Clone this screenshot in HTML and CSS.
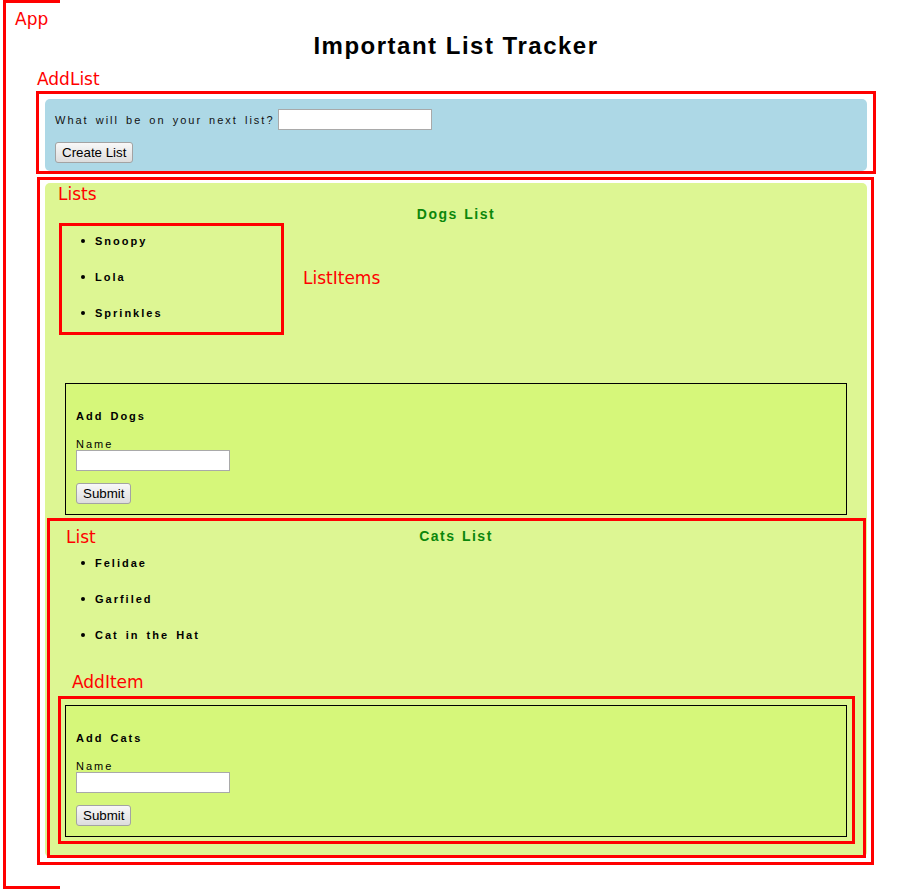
FILE: index.html
```html
<!DOCTYPE html>
<html>
<head>
<meta charset="utf-8">
<title>Important List Tracker</title>
<link rel="stylesheet" href="styles.css">
</head>
<body>
<div class="page">
  <h1 class="title">Important List Tracker</h1>

  <div class="add-list">
    <div class="prompt-row">
      <label class="prompt">What will be on your next list?</label>
      <input class="text-input prompt-input" type="text">
    </div>
    <button class="btn create-btn">Create List</button>
  </div>

  <div class="lists">
    <section class="list">
      <h3 class="list-title">Dogs List</h3>
      <ul class="items">
        <li class="item">Snoopy</li>
        <li class="item">Lola</li>
        <li class="item">Sprinkles</li>
      </ul>
      <form class="add-item">
        <h4 class="add-title">Add Dogs</h4>
        <label class="name-label">Name</label>
        <input class="text-input" type="text">
        <button class="btn submit-btn" type="button">Submit</button>
      </form>
    </section>

    <section class="list">
      <h3 class="list-title">Cats List</h3>
      <ul class="items">
        <li class="item">Felidae</li>
        <li class="item">Garfiled</li>
        <li class="item">Cat in the Hat</li>
      </ul>
      <form class="add-item">
        <h4 class="add-title">Add Cats</h4>
        <label class="name-label">Name</label>
        <input class="text-input" type="text">
        <button class="btn submit-btn" type="button">Submit</button>
      </form>
    </section>
  </div>

  <!-- annotation overlays -->
  <div class="note-box note-app"></div>
  <div class="note-box note-addlist"></div>
  <div class="note-box note-lists"></div>
  <div class="note-box note-listitems"></div>
  <div class="note-box note-list"></div>
  <div class="note-box note-additem"></div>

  <span class="note-label label-app">App</span>
  <span class="note-label label-addlist">AddList</span>
  <span class="note-label label-lists">Lists</span>
  <span class="note-label label-listitems">ListItems</span>
  <span class="note-label label-list">List</span>
  <span class="note-label label-additem">AddItem</span>
</div>
</body>
</html>
```

FILE: styles.css
```css
html, body {
  margin: 0;
  padding: 0;
  background: #ffffff;
}

.page {
  position: relative;
  width: 912px;
  min-height: 894px;
  padding-top: 32px;
  box-sizing: border-box;
  font-family: "Liberation Sans", Arial, sans-serif;
  color: #000;
  word-spacing: 2px;
}

.title {
  margin: 0 0 39px 0;
  font-size: 24px;
  line-height: 28px;
  font-weight: bold;
  letter-spacing: 1.5px;
  word-spacing: 0;
  text-align: center;
}

/* ---------- AddList ---------- */
.add-list {
  margin-left: 45px;
  width: 822px;
  box-sizing: border-box;
  background: #add8e6;
  border-radius: 5px;
  padding: 10px 10px 8px 10px;
}

.prompt-row {
  display: flex;
  align-items: center;
  height: 21px;
}

.prompt {
  font-size: 11px;
  letter-spacing: 2px;
  word-spacing: 2px;
  color: #111;
}

.text-input {
  width: 154px;
  height: 21px;
  box-sizing: border-box;
  border: 1px solid #a9a9a9;
  background: #fff;
  padding: 1px 3px;
  margin: 0;
  font-family: "Liberation Sans", Arial, sans-serif;
  font-size: 13px;
  display: block;
}

.prompt-row .prompt-input {
  margin-left: 3px;
}

.btn {
  display: block;
  height: 21px;
  box-sizing: border-box;
  border: 1px solid #a3a3a3;
  border-radius: 3px;
  background: linear-gradient(#f8f8f8, #dddddd);
  padding: 0 6px;
  margin: 0;
  font-family: "Liberation Sans", Arial, sans-serif;
  font-size: 13.33px;
  letter-spacing: normal;
  word-spacing: normal;
  color: #000;
  line-height: 19px;
}

.add-list .create-btn {
  margin-top: 12px;
}

/* ---------- Lists ---------- */
.lists {
  margin: 12px 0 0 45px;
  width: 822px;
  box-sizing: border-box;
  background: #ddf693;
  border-radius: 5px;
  padding: 10px 20px 20px 20px;
}

.list-title {
  margin: 13px 0 0 0;
  font-size: 14px;
  line-height: 16px;
  font-weight: bold;
  letter-spacing: 1.5px;
  word-spacing: 1px;
  text-align: center;
  color: #0b870b;
}

.items {
  list-style: none;
  margin: 1px 0 52px 0;
  padding: 0;
}

.item {
  display: flex;
  align-items: center;
  height: 36px;
  font-size: 11px;
  font-weight: bold;
  letter-spacing: 2px;
  white-space: pre;
}

.item::before {
  content: "";
  width: 4px;
  height: 4px;
  border-radius: 50%;
  background: #000;
  margin-left: 16px;
  margin-right: 10px;
  flex: none;
}

.add-item {
  margin: 0;
  border: 1px solid #000;
  background: #d6f77a;
  padding: 26px 10px 10px 10px;
}

.add-title {
  margin: 0 0 16px 0;
  font-size: 11px;
  line-height: 13px;
  font-weight: bold;
  letter-spacing: 2px;
}

.name-label {
  display: block;
  font-size: 11px;
  line-height: 11px;
  letter-spacing: 2px;
}

.add-item .submit-btn {
  margin-top: 12px;
}

/* ---------- annotation overlays ---------- */
.note-box {
  position: absolute;
  box-sizing: border-box;
  border: 3px solid #ff0000;
  pointer-events: none;
}

.note-app {
  left: 3px;
  top: 0;
  width: 57px;
  height: 889px;
  border-right: 0;
}

.note-addlist {
  left: 36px;
  top: 91px;
  width: 840px;
  height: 83px;
}

.note-lists {
  left: 37px;
  top: 177px;
  width: 837px;
  height: 688px;
}

.note-listitems {
  left: 59px;
  top: 223px;
  width: 225px;
  height: 112px;
}

.note-list {
  left: 47px;
  top: 518px;
  width: 819px;
  height: 340px;
}

.note-additem {
  left: 58px;
  top: 696px;
  width: 797px;
  height: 148px;
}

.note-label {
  position: absolute;
  font-family: "DejaVu Sans", Verdana, sans-serif;
  font-size: 17px;
  line-height: 17px;
  word-spacing: 0;
  color: #ff0000;
  white-space: nowrap;
}

.label-app { left: 15px; top: 11px; }
.label-addlist { left: 37px; top: 71px; }
.label-lists { left: 58px; top: 186px; }
.label-listitems { left: 303px; top: 270px; }
.label-list { left: 66px; top: 529px; }
.label-additem { left: 72px; top: 674px; }
```
